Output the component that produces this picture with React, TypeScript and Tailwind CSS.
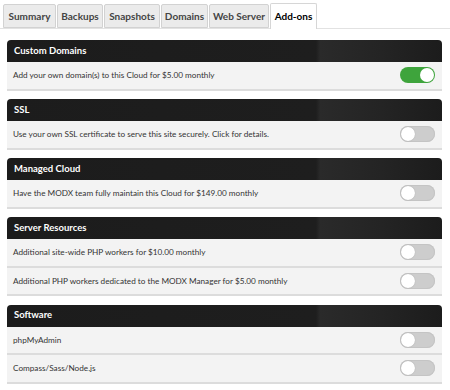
import React from "react";

const tabs = [
  { label: "Summary", w: "w-[53px]" },
  { label: "Backups", w: "w-[46px]" },
  { label: "Snapshots", w: "w-[56px]" },
  { label: "Domains", w: "w-[47px]" },
  { label: "Web Server", w: "w-[60px]" },
  { label: "Add-ons", w: "w-[47px]", active: true },
];

type Row = { text: string; on?: boolean };
const sections: { title: string; rows: Row[] }[] = [
  { title: "Custom Domains", rows: [{ text: "Add your own domain(s) to this Cloud for $5.00 monthly", on: true }] },
  { title: "SSL", rows: [{ text: "Use your own SSL certificate to serve this site securely. Click for details." }] },
  { title: "Managed Cloud", rows: [{ text: "Have the MODX team fully maintain this Cloud for $149.00 monthly" }] },
  {
    title: "Server Resources",
    rows: [
      { text: "Additional site-wide PHP workers for $10.00 monthly" },
      { text: "Additional PHP workers dedicated to the MODX Manager for $5.00 monthly" },
    ],
  },
  { title: "Software", rows: [{ text: "phpMyAdmin" }, { text: "Compass/Sass/Node.js" }] },
];

function Toggle({ on }: { on?: boolean }) {
  if (on) {
    return (
      <div className="w-[35px] h-[16px] rounded-full bg-[#3ea43c] flex items-center justify-end pr-[1px]">
        <div className="w-[14px] h-[14px] rounded-full bg-white" />
      </div>
    );
  }
  return (
    <div className="w-[35px] h-[16px] rounded-full bg-[#cdcdcd] flex items-center pl-[1px] shadow-[inset_0_0_0_1px_#c4c4c4]">
      <div className="w-[14px] h-[14px] rounded-full bg-white shadow-[0_0_1px_#999]" />
    </div>
  );
}

export default function App() {
  return (
    <div className="w-[450px] h-[390px] bg-white overflow-hidden font-['Lato',sans-serif] text-[#333]">
      <div className="pl-[3px] pt-[3px] flex items-end gap-[1px] border-b border-[#e2e2e2] h-[29px]">
        {tabs.map((t) =>
          t.active ? (
            <div
              key={t.label}
              className={`${t.w} h-[26px] bg-white border border-b-0 border-[#d6d6d6] rounded-t-[2px] flex items-center justify-center text-[10px] font-bold text-black -mb-px`}
            >
              {t.label}
            </div>
          ) : (
            <div
              key={t.label}
              className={`${t.w} h-[24px] bg-[#ebebeb] border border-[#d2d2d2] rounded-t-[2px] flex items-center justify-center text-[10px] font-bold text-[#444]`}
            >
              {t.label}
            </div>
          )
        )}
      </div>
      <div className="pl-[7px] w-[442px] pt-[11px] flex flex-col gap-[8.5px]">
        {sections.map((s) => (
          <div key={s.title} className="flex flex-col">
            <div className="h-[22px] rounded-t-[4px] bg-[linear-gradient(90deg,#1c1c1c_0%,#1e1e1e_71%,#2a2a2a_72%,#242424_86%,#1c1c1c_100%)] flex items-center pl-[7px] text-white text-[9.5px] font-bold">
              {s.title}
            </div>
            {s.rows.map((r, i) => (
              <div
                key={i}
                className="h-[28.5px] bg-[#f3f3f3] border-b-[2px] border-[#dcdcdc] flex items-center justify-between pl-[6px] pr-[7px] text-[8.2px] text-[#333]"
              >
                <span>{r.text}</span>
                <Toggle on={r.on} />
              </div>
            ))}
          </div>
        ))}
      </div>
    </div>
  );
}
